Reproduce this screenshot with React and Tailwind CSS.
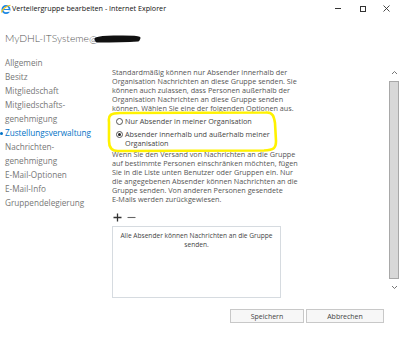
import React from "react";

const font = { fontFamily: '"Open Sans", "Noto Sans", sans-serif' };
const lato = { fontFamily: 'Lato, "Open Sans", sans-serif' };

function IEIcon() {
  return (
    <svg width="10" height="10" viewBox="0 0 10 10" className="shrink-0">
      <circle cx="5" cy="5.5" r="3.6" fill="none" stroke="#1e88e5" strokeWidth="1.8" />
      <rect x="2" y="5" width="6" height="1" fill="#1e88e5" />
      <rect x="5" y="6.2" width="4" height="1.6" fill="#fff" />
      <path d="M0.8 8.5 C 0 6, 6 1.5, 9.5 1.2" fill="none" stroke="#f5c518" strokeWidth="1.1" />
    </svg>
  );
}

function Nav() {
  const items = [
    ["Allgemein"],
    ["Besitz"],
    ["Mitgliedschaft"],
    ["Mitgliedschafts-", "genehmigung"],
    ["Zustellungsverwaltung"],
    ["Nachrichten-", "genehmigung"],
    ["E-Mail-Optionen"],
    ["E-Mail-Info"],
    ["Gruppendelegierung"],
  ];
  return (
    <div className="w-[112px] shrink-0 flex flex-col text-[8.2px] leading-[14px] text-[#777]">
      {items.map((lines, i) => {
        const active = lines[0] === "Zustellungsverwaltung";
        return (
          <div key={i} className={`relative pl-[5px] ${active ? "text-[#0072c6]" : ""}`}>
            {active && (
              <span className="absolute left-[0px] top-[6px] w-[3px] h-[3px] rounded-full bg-[#0072c6]" />
            )}
            {lines.map((l, j) => (
              <div key={j}>{l}</div>
            ))}
          </div>
        );
      })}
    </div>
  );
}

function Radio({ checked }) {
  return (
    <span className="w-[7px] h-[7px] rounded-full border border-[#555] bg-white flex items-center justify-center shrink-0 mt-[1px]">
      {checked && <span className="w-[3px] h-[3px] rounded-full bg-[#222]" />}
    </span>
  );
}

export default function App() {
  return (
    <div className="w-[400px] h-[343px] bg-white relative overflow-hidden text-[#444]" style={font}>
      {/* title bar */}
      <div className="h-[17px] flex items-center">
        <div className="pl-[1px] flex items-center gap-[1px]">
          <IEIcon />
          <span className="text-[7.2px] text-[#111] leading-none">Verteilergruppe bearbeiten - Internet Explorer</span>
        </div>
        <div className="ml-auto flex items-center h-full text-[#333]">
          <div className="w-[25px] flex justify-center items-center">
            <span className="block w-[6px] h-px bg-[#333]" />
          </div>
          <div className="w-[25px] flex justify-center items-center">
            <span className="block w-[6px] h-[6px] border border-[#333]" />
          </div>
          <div className="w-[25px] flex justify-center items-center pr-[2px]">
            <svg width="7" height="7" viewBox="0 0 7 7">
              <path d="M0.5 0.5 L6.5 6.5 M6.5 0.5 L0.5 6.5" stroke="#333" strokeWidth="0.9" />
            </svg>
          </div>
        </div>
      </div>

      {/* heading */}
      <div className="mt-[13px] h-[16px] pl-[5px] flex items-center relative">
        <span className="text-[10.3px] leading-[16px] text-[#555] font-light" style={lato}>MyDHL-ITSysteme@</span>
        <svg width="50" height="14" viewBox="0 0 50 14" className="-ml-[4px]">
          <path d="M3 8 C 10 5, 20 6, 30 6 S 44 6, 46 7 L 45 9 C 30 10, 15 10, 4 10 Z" fill="#111" stroke="#111" strokeWidth="3" strokeLinejoin="round" />
        </svg>
      </div>

      {/* body */}
      <div className="mt-[10px] flex">
        <Nav />
        <div className="w-[274px] pt-[12px] text-[7.25px] leading-[9px] text-[#555] relative">
          <p>
            Standardmäßig können nur Absender innerhalb der<br />
            Organisation Nachrichten an diese Gruppe senden. Sie<br />
            können auch zulassen, dass Personen außerhalb der<br />
            Organisation Nachrichten an diese Gruppe senden<br />
            können. Wählen Sie eine der folgenden Optionen aus.
          </p>
          <div className="pl-[4px] mt-[4px] flex flex-col gap-[4px] text-[#444]">
            <div className="flex items-start gap-[2px]">
              <Radio />
              <span>Nur Absender in meiner Organisation</span>
            </div>
            <div className="flex items-start gap-[2px]">
              <Radio checked />
              <span>
                Absender innerhalb und außerhalb meiner<br />Organisation
              </span>
            </div>
          </div>
          <p className="mt-[2px]">
            Wenn Sie den Versand von Nachrichten an die Gruppe<br />
            auf bestimmte Personen einschränken möchten, fügen<br />
            Sie in die Liste unten Benutzer oder Gruppen ein. Nur<br />
            die angegebenen Absender können Nachrichten an die<br />
            Gruppe senden. Von anderen Personen gesendete<br />
            E-Mails werden zurückgewiesen.
          </p>
          <div className="mt-[7px] flex items-center gap-[5px] h-[12px] pl-[1px]">
            <svg width="9" height="9" viewBox="0 0 9 9">
              <path d="M4.5 0.5 V8.5 M0.5 4.5 H8.5" stroke="#333" strokeWidth="1.3" />
            </svg>
            <svg width="9" height="9" viewBox="0 0 9 9">
              <path d="M0.5 4.5 H8.5" stroke="#666" strokeWidth="1.1" />
            </svg>
          </div>
          <div className="mt-[3px] w-[169px] h-[72px] border border-[#d6dbe0] pt-[4px] text-center text-[6.6px] text-[#444] whitespace-nowrap">
            Alle Absender können Nachrichten an die Gruppe<br />senden.
          </div>

          {/* yellow marker annotation */}
          <svg className="absolute left-[-6px] top-[55px]" width="176" height="44" viewBox="0 0 176 44">
            <path
              d="M3 11 C 2 4, 5 2, 14 2 L 160 1.5 C 167 1, 168 6, 169 12 L 170 30 C 170 37, 168 39, 158 39.5 L 12 40 C 5 40, 3 36, 3 30 Z"
              fill="none"
              stroke="#fff200"
              strokeWidth="2.6"
              strokeLinejoin="round"
            />
          </svg>
        </div>
      </div>

      {/* scrollbar */}
      <div className="absolute left-[389px] top-[70px] w-[10px] flex flex-col items-center">
        <svg width="7" height="5" viewBox="0 0 7 5">
          <path d="M1 4 L3.5 1.5 L6 4" fill="none" stroke="#666" strokeWidth="0.9" />
        </svg>
        <div className="mt-[6px] w-[10px] h-[198px] bg-[#d8d8d8] border border-[#a8a8a8]" />
        <svg className="mt-[6px]" width="7" height="5" viewBox="0 0 7 5">
          <path d="M1 1 L3.5 3.5 L6 1" fill="none" stroke="#666" strokeWidth="0.9" />
        </svg>
      </div>

      {/* buttons */}
      <div className="absolute left-[230px] top-[309px] flex gap-[2px] text-[7px] text-[#444]">
        <button className="w-[74px] h-[14px] border border-[#c8c8c8] bg-[#f7f7f7] leading-none">Speichern</button>
        <button className="w-[78px] h-[14px] border border-[#c8c8c8] bg-[#f7f7f7] leading-none">Abbrechen</button>
      </div>
    </div>
  );
}
